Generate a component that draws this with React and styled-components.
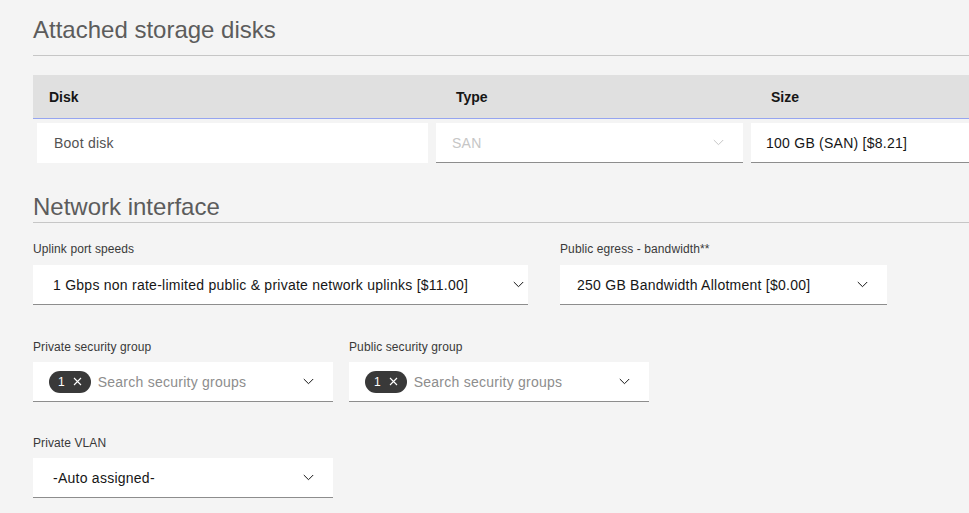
import React from "react";
import styled, { createGlobalStyle } from "styled-components";

const Global = createGlobalStyle`
  html, body { margin: 0; padding: 0; }
  body {
    background: #f4f4f4;
    overflow: hidden;
    font-family: "Liberation Sans", Arial, sans-serif;
    color: #161616;
  }
  * { box-sizing: border-box; }
`;

const Page = styled.div`
  padding: 0 0 0 33px;
  width: 100%;
`;

const SectionTitle = styled.h2`
  margin: ${(p) => p.$top}px 0 0 0;
  padding: 0 0 ${(p) => p.$bottom}px 0;
  font-size: 24px;
  line-height: 28px;
  font-weight: 400;
  color: #5c5c5c;
  border-bottom: 1px solid #c6c6c6;
`;

const Table = styled.div`
  margin-top: 19px;
  width: calc(100% + 200px);
`;

const HeaderRow = styled.div`
  display: grid;
  grid-template-columns: 399px 315px 1fr;
  height: 44px;
  background: #e0e0e0;
  border-bottom: 1px solid #96a5f0;
`;

const HeaderCell = styled.div`
  display: flex;
  align-items: center;
  padding-left: ${(p) => p.$pad}px;
  font-size: 14px;
  font-weight: 700;
  color: #161616;
`;

const BodyRow = styled.div`
  display: grid;
  grid-template-columns: 399px 315px 1fr;
  padding-top: 4px;
`;

const Cell = styled.div`
  margin: 0 4px;
  height: 40px;
  background: #ffffff;
  display: flex;
  align-items: center;
  justify-content: space-between;
  padding: 0 ${(p) => p.$right || 16}px 0 ${(p) => p.$pad}px;
  font-size: 14px;
  letter-spacing: 0.25px;
  color: ${(p) => p.$color || "#161616"};
  border-bottom: 1px solid ${(p) => (p.$line ? "#8d8d8d" : "transparent")};
`;

const FormRow = styled.div`
  display: flex;
  gap: ${(p) => p.$gap}px;
  margin-top: ${(p) => p.$top}px;
`;

const Field = styled.div`
  width: ${(p) => p.$w}px;
  display: flex;
  flex-direction: column;
`;

const Label = styled.label`
  font-size: 12px;
  line-height: 16px;
  color: #393939;
  margin-bottom: ${(p) => p.$mb || 8}px;
  letter-spacing: 0.1px;
`;

const SelectBox = styled.div`
  height: 40px;
  background: #ffffff;
  border-bottom: 1px solid #8d8d8d;
  display: flex;
  align-items: center;
  padding: 0 ${(p) => p.$right}px 0 ${(p) => p.$pad}px;
  font-size: 14px;
  letter-spacing: 0.25px;
  color: #161616;
`;

const Value = styled.span`
  flex: 1;
  white-space: nowrap;
  overflow: hidden;
`;

const Placeholder = styled.span`
  flex: 1;
  color: #8d8d8d;
  white-space: nowrap;
`;

const Tag = styled.span`
  display: inline-flex;
  align-items: center;
  gap: 8px;
  height: 22px;
  padding: 0 9px 0 9px;
  margin-right: 7px;
  border-radius: 11px;
  background: #393939;
  color: #ffffff;
  font-size: 12px;
  letter-spacing: 0;
`;

const Chevron = ({ color = "#161616" }) => (
  <svg width="11" height="7" viewBox="0 0 11 7" fill="none">
    <path d="M0.8 1 L5.5 5.7 L10.2 1" stroke={color} strokeWidth="1" />
  </svg>
);

const Close = () => (
  <svg width="9" height="9" viewBox="0 0 9 9" fill="none">
    <path d="M1 1 L8 8 M8 1 L1 8" stroke="#ffffff" strokeWidth="1.1" />
  </svg>
);

export default function App() {
  return (
    <>
      <Global />
      <Page>
        <SectionTitle $top={16} $bottom={11}>Attached storage disks</SectionTitle>
        <Table>
          <HeaderRow>
            <HeaderCell $pad={16}>Disk</HeaderCell>
            <HeaderCell $pad={24}>Type</HeaderCell>
            <HeaderCell $pad={24}>Size</HeaderCell>
          </HeaderRow>
          <BodyRow>
            <Cell $pad={17} $color="#525252">Boot disk</Cell>
            <Cell $pad={16} $right={19} $color="#c6c6c6" $line>
              <span>SAN</span>
              <Chevron color="#c6c6c6" />
            </Cell>
            <Cell $pad={15} $line>100 GB (SAN) [$8.21]</Cell>
          </BodyRow>
        </Table>

        <SectionTitle $top={30} $bottom={1}>Network interface</SectionTitle>

        <FormRow $gap={32} $top={18}>
          <Field $w={495}>
            <Label>Uplink port speeds</Label>
            <SelectBox $pad={20} $right={4}>
              <Value>1 Gbps non rate-limited public &amp; private network uplinks [$11.00]</Value>
              <Chevron />
            </SelectBox>
          </Field>
          <Field $w={327}>
            <Label>Public egress - bandwidth**</Label>
            <SelectBox $pad={17} $right={19}>
              <Value>250 GB Bandwidth Allotment [$0.00]</Value>
              <Chevron />
            </SelectBox>
          </Field>
        </FormRow>

        <FormRow $gap={16} $top={34}>
          <Field $w={300}>
            <Label $mb={7}>Private security group</Label>
            <SelectBox $pad={16} $right={19}>
              <Tag>1<Close /></Tag>
              <Placeholder>Search security groups</Placeholder>
              <Chevron />
            </SelectBox>
          </Field>
          <Field $w={300}>
            <Label $mb={7}>Public security group</Label>
            <SelectBox $pad={16} $right={19}>
              <Tag>1<Close /></Tag>
              <Placeholder>Search security groups</Placeholder>
              <Chevron />
            </SelectBox>
          </Field>
        </FormRow>

        <FormRow $gap={16} $top={33}>
          <Field $w={300}>
            <Label $mb={7}>Private VLAN</Label>
            <SelectBox $pad={20} $right={19}>
              <Value>-Auto assigned-</Value>
              <Chevron />
            </SelectBox>
          </Field>
        </FormRow>
      </Page>
    </>
  );
}
